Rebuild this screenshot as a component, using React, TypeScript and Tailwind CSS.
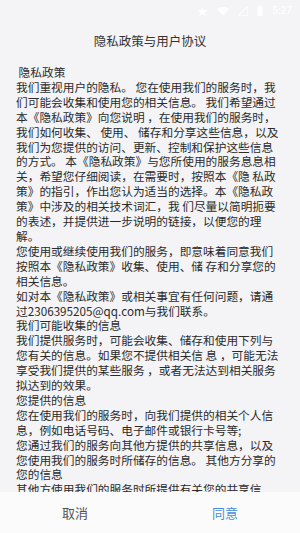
import React from "react";

const lines: string[] = [
  " 隐私政策",
  "我们重视用户的隐私。 您在使用我们的服务时，我",
  "们可能会收集和使用您的相关信息。 我们希望通过",
  "本《隐私政策》向您说明 ，在使用我们的服务时，",
  "我们如何收集、 使用、 储存和分享这些信息，以及",
  "我们为您提供的访问、更新、控制和保护这些信息",
  "的方式。 本《隐私政策》与您所使用的服务息息相",
  "关，希望您仔细阅读，在需要时，按照本《隐 私政",
  "策》的指引，作出您认为适当的选择。本《隐私政",
  "策》中涉及的相关技术词汇，我 们尽量以简明扼要",
  "的表述，并提供进一步说明的链接，以便您的理",
  "解。",
  "您使用或继续使用我们的服务，即意味着同意我们",
  "按照本《隐私政策》收集、使用、储 存和分享您的",
  "相关信息。",
  "如对本《隐私政策》或相关事宜有任何问题，请通",
  "过2306395205@qq.com与我们联系。",
  "我们可能收集的信息",
  "我们提供服务时，可能会收集、储存和使用下列与",
  "您有关的信息。如果您不提供相关信 息 ，可能无法",
  "享受我们提供的某些服务 ，或者无法达到相关服务",
  "拟达到的效果。",
  "您提供的信息",
  "您在使用我们的服务时，向我们提供的相关个人信",
  "息，例如电话号码、电子邮件或银行卡号等;",
  "您通过我们的服务向其他方提供的共享信息，以及",
  "您使用我们的服务时所储存的信息。 其他方分享的",
  "您的信息",
  "其他方使用我们的服务时所提供有关您的共享信",
];

const font = { fontFamily: '"Noto Sans CJK SC", "Noto Sans", sans-serif' };

export default function App() {
  return (
    <div
      className="w-[300px] h-[533px] bg-[#f4f4f6] flex flex-col overflow-hidden"
      style={font}
    >
      {/* status bar */}
      <div className="h-[22px] flex items-center justify-end gap-[9px] pr-[8px] text-white opacity-90">
        <svg width="11" height="11" viewBox="0 0 10 10">
          <path d="M5 0.5 L6.3 3.6 L9.6 3.8 L7 6 L7.9 9.3 L5 7.5 L2.1 9.3 L3 6 L0.4 3.8 L3.7 3.6Z" fill="white" />
        </svg>
        <svg width="12" height="10" viewBox="0 0 11 9">
          <path d="M0 2.5 Q5.5 -1.5 11 2.5 L5.5 9 Z" fill="white" />
        </svg>
        <svg width="10" height="10" viewBox="0 0 9 9">
          <path d="M9 0 L9 9 L0 9 Z" fill="none" stroke="white" strokeWidth="1" />
        </svg>
        <svg width="6" height="12" viewBox="0 0 6 11">
          <rect x="0.5" y="1.5" width="5" height="9" fill="white" />
          <rect x="1.5" y="0" width="3" height="2" fill="white" />
        </svg>
        <span className="text-[10px] leading-none text-white font-semibold" style={{ fontFamily: "Roboto, sans-serif" }}>
          5:27
        </span>
      </div>

      {/* title */}
      <div className="h-[38px] flex items-center justify-center">
        <span className="text-[12.5px] text-[#333333]">隐私政策与用户协议</span>
      </div>

      {/* content */}
      <div className="flex-1 overflow-hidden pl-[16px] pt-[5px]">
        {lines.map((l, i) => (
          <div
            key={i}
            className="whitespace-pre text-[11.7px] leading-[14.9px] text-[#2b2b2b]"
          >
            {l}
          </div>
        ))}
      </div>

      {/* bottom bar */}
      <div className="h-[41px] bg-[#fbfbfb] flex items-center">
        <div className="flex-1 flex items-center justify-center text-[13px] text-[#555555]">
          取消
        </div>
        <div className="flex-1 flex items-center justify-center text-[13px] text-[#4a8fd8]">
          同意
        </div>
      </div>
    </div>
  );
}
